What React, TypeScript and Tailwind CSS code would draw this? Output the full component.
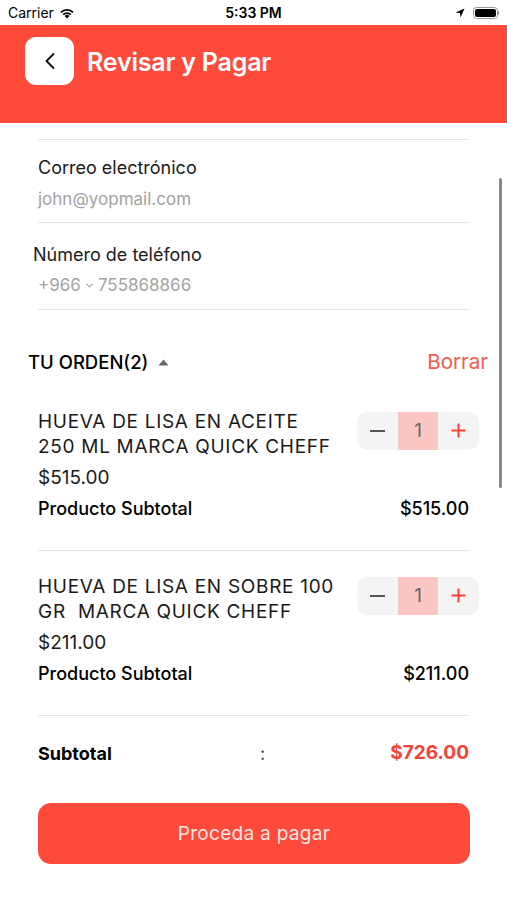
import { ChevronLeft, ChevronDown } from "lucide-react";

const font = { fontFamily: "Inter, 'Noto Sans', sans-serif" };

interface OrderItem {
  lines: string[];
  price: string;
  qty: number;
}

const items: OrderItem[] = [
  {
    lines: ["HUEVA DE LISA EN ACEITE", "250 ML MARCA QUICK CHEFF"],
    price: "$515.00",
    qty: 1,
  },
  {
    lines: ["HUEVA DE LISA EN SOBRE 100", "GR\u00a0 MARCA QUICK CHEFF"],
    price: "$211.00",
    qty: 1,
  },
];

function StatusBar() {
  return (
    <div className="h-[25px] flex items-center justify-between px-[8px] bg-white text-black">
      <div className="flex items-center gap-[5px] text-[14px]">
        <span>Carrier</span>
        <svg width="16" height="12" viewBox="0 0 16 12">
          <path d="M8 11.5 L5.6 9 A3.4 3.4 0 0 1 10.4 9 Z" fill="#000" />
          <path d="M3.6 7 A6.2 6.2 0 0 1 12.4 7 L11.1 8.3 A4.4 4.4 0 0 0 4.9 8.3 Z" fill="#000" />
          <path d="M1.3 4.7 A9.4 9.4 0 0 1 14.7 4.7 L13.4 6 A7.6 7.6 0 0 0 2.6 6 Z" fill="#000" />
        </svg>
      </div>
      <div className="text-[14px] font-semibold absolute left-1/2 -translate-x-1/2">5:33 PM</div>
      <div className="flex items-center gap-[8px]">
        <svg width="10" height="10" viewBox="0 0 10 10">
          <path d="M9.5 0.5 L0.5 4.5 L5 5 L5.5 9.5 Z" fill="#000" />
        </svg>
        <div className="flex items-center">
          <div className="w-[25px] h-[12px] rounded-[3.5px] border border-[#999] p-[1px]">
            <div className="w-full h-full rounded-[2px] bg-black" />
          </div>
          <div className="w-[1.5px] h-[4px] bg-[#999] rounded-r-sm" />
        </div>
      </div>
    </div>
  );
}

function Stepper({ qty }: { qty: number }) {
  return (
    <div className="flex h-[38px] w-[122px] rounded-[10px] bg-[#f4f4f4] overflow-hidden shrink-0">
      <div className="w-[41px] flex items-center justify-center">
        <div className="w-[15px] h-[2px] bg-[#555]" />
      </div>
      <div className="w-[40px] bg-[#fcc7c2] flex items-center justify-center text-[19px] text-[#666]">
        {qty}
      </div>
      <div className="w-[41px] flex items-center justify-center">
        <svg width="15" height="15" viewBox="0 0 15 15">
          <path d="M7.5 0.5 V14.5 M0.5 7.5 H14.5" stroke="#f44336" strokeWidth="2" />
        </svg>
      </div>
    </div>
  );
}

function ItemRow({ item, first }: { item: OrderItem; first?: boolean }) {
  return (
    <div
      className={
        "mx-[38px] pb-[29px] border-b border-[#e4e4e4] " +
        (first ? "pt-[31px]" : "pt-[23px]")
      }
    >
      <div className="flex justify-between">
        <div className="text-[19px] leading-[25px] tracking-[0.7px] text-[#1a1a1a]">
          {item.lines.map((l) => (
            <div key={l}>{l}</div>
          ))}
        </div>
        <div className="mr-[-10px] mt-[3px]">
          <Stepper qty={item.qty} />
        </div>
      </div>
      <div className="text-[19px] leading-[25px] mt-[6px] text-[#1a1a1a]">{item.price}</div>
      <div className="flex justify-between mt-[6px] text-[18px] leading-[25px] font-medium text-black">
        <span>Producto Subtotal</span>
        <span>{item.price}</span>
      </div>
    </div>
  );
}

export default function App() {
  return (
    <div className="relative w-[507px] h-[900px] bg-white overflow-hidden" style={font}>
      <StatusBar />
      <div className="h-[98px] bg-[#fe4a3a] flex items-start pt-[12px] px-[25px] gap-[13px]">
        <div className="w-[49px] h-[48px] rounded-[11px] bg-white flex items-center justify-center">
          <ChevronLeft size={28} strokeWidth={1.6} color="#111" />
        </div>
        <div className="h-[48px] pt-[3px] flex items-center text-white text-[25px] font-semibold tracking-[-0.2px]">
          Revisar y Pagar
        </div>
      </div>

      <div className="absolute right-[5px] top-[178px] w-[3px] h-[310px] rounded-full bg-[#8a8a8a]" />

      <div className="pt-[16px]">
        <div className="mx-[38px] border-t border-[#e4e4e4]" />
        <div className="mx-[38px] pt-[17px] pb-[12px] border-b border-[#e4e4e4]">
          <div className="text-[18px] leading-[22px] text-[#1a1a1a]">Correo electrónico</div>
          <div className="text-[17px] leading-[22px] mt-[9px] text-[#a3a3a3]">john@yopmail.com</div>
        </div>
        <div className="mx-[38px] pt-[21px] pb-[13px] border-b border-[#e4e4e4]">
          <div className="text-[18px] leading-[22px] text-[#1a1a1a] ml-[-5px]">Número de teléfono</div>
          <div className="flex items-center text-[17px] leading-[22px] mt-[8px] text-[#a3a3a3]">
            <span>+966</span>
            <ChevronDown size={11} strokeWidth={2.5} className="mx-[3px]" />
            <span>755868866</span>
          </div>
        </div>

        <div className="flex items-center justify-between pl-[28px] pr-[19px] mt-[37px]">
          <div className="flex items-center gap-[10px] text-[18.5px] font-medium text-black">
            <span>TU ORDEN(2)</span>
            <svg width="11" height="7" viewBox="0 0 11 7">
              <path d="M5.5 0.5 L10.5 6.5 L0.5 6.5 Z" fill="#666" />
            </svg>
          </div>
          <div className="text-[20.5px] text-[#f55a4c]">Borrar</div>
        </div>

        {items.map((it, i) => (
          <ItemRow key={it.price} item={it} first={i === 0} />
        ))}

        <div className="mx-[38px] mt-[23px] flex items-center text-[18px]">
          <span className="font-bold text-black w-[222px]">Subtotal</span>
          <span className="text-[#444]">:</span>
          <span className="ml-auto font-bold text-[19px] text-[#f44336]">$726.00</span>
        </div>

        <button className="mx-[38px] mt-[36px] w-[432px] h-[61px] rounded-[13px] bg-[#fe4a3a] text-[#ffe8e4] text-[19px] tracking-[0.3px]">
          Proceda a pagar
        </button>
      </div>
    </div>
  );
}
